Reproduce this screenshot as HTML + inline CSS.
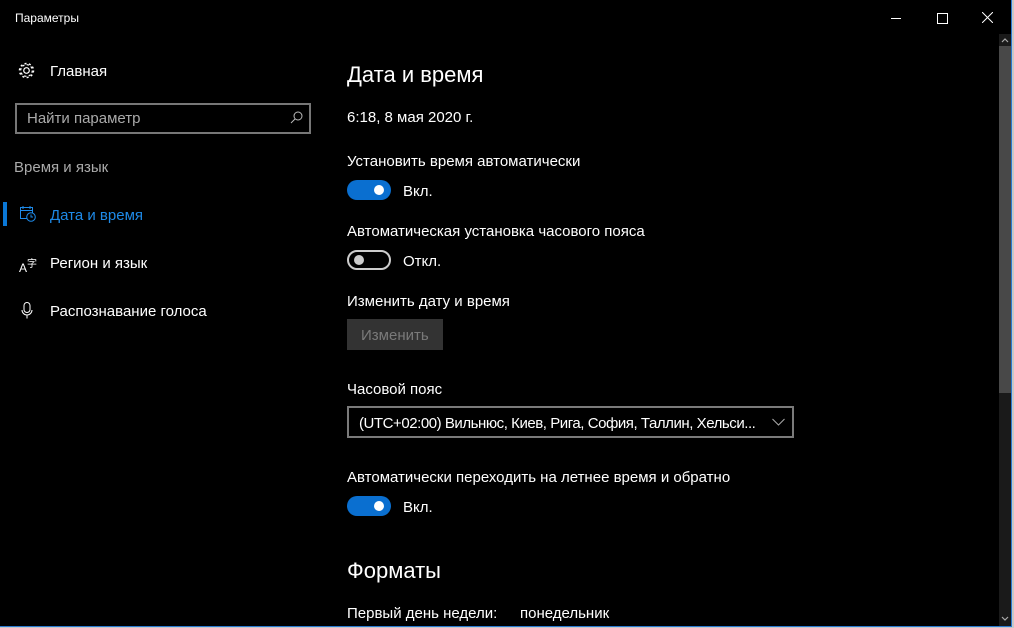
<!DOCTYPE html>
<html><head><meta charset="utf-8"><style>
body{margin:0;width:1014px;height:628px;background:#c8c8c8;overflow:hidden;font-family:"Liberation Sans","DejaVu Sans",sans-serif;position:relative}
.win{position:absolute;left:0;top:0;width:1011px;height:626px;background:#000;border-right:1px solid #2b79d0;border-bottom:1px solid #2b79d0}
.t{position:absolute;color:#fff;white-space:nowrap}
.tog{position:absolute;width:44px;height:20px;border-radius:11px;box-sizing:border-box}
.on{background:#0a6fd0}
.on:after{content:"";position:absolute;right:7px;top:5px;width:10px;height:10px;border-radius:50%;background:#fff}
.off{border:2px solid #ccc}
.off:after{content:"";position:absolute;left:5px;top:3px;width:10px;height:10px;border-radius:50%;background:#ccc}
</style></head><body><div class="win">
<div class="t" style="left:15px;top:11px;font-size:12px">Параметры</div>
<div style="position:absolute;left:891px;top:18px;width:10px;height:1px;background:#fff"></div>
<div style="position:absolute;left:937px;top:13px;width:9px;height:9px;border:1px solid #fff"></div>
<svg style="position:absolute;left:982px;top:12px" width="11" height="11"><path d="M0 0L11 11M11 0L0 11" stroke="#fff" stroke-width="1"/></svg>
<svg style="position:absolute;left:18px;top:62px" width="17" height="17" viewBox="0 0 17 17"><circle cx="8.5" cy="8.5" r="2.8" fill="none" stroke="#fff" stroke-width="1.2"/><circle cx="8.5" cy="8.5" r="5.8" fill="none" stroke="#fff" stroke-width="1.2" stroke-dasharray="2.3 2.25"/><circle cx="8.5" cy="8.5" r="7" fill="none" stroke="#fff" stroke-width="1.5" stroke-dasharray="2 2.4"/></svg>
<div class="t" style="left:50px;top:63px;font-size:15px">Главная</div>
<div style="position:absolute;left:15px;top:103px;width:292px;height:27px;border:2px solid #777"></div>
<div class="t" style="left:27px;top:110px;font-size:15px;color:#aaa">Найти параметр</div>
<svg style="position:absolute;left:290px;top:111px" width="13" height="13"><circle cx="8" cy="5" r="4" fill="none" stroke="#bbb" stroke-width="1"/><path d="M5 8L1 12" stroke="#bbb"/></svg>
<div class="t" style="left:14px;top:159px;font-size:15px;color:#aaa">Время и язык</div>
<div style="position:absolute;left:3px;top:202px;width:4px;height:24px;background:#0a78d7"></div>
<svg style="position:absolute;left:20px;top:206px" width="16" height="16"><rect x="0.5" y="1.5" width="12" height="11" fill="none" stroke="#1e8ae8"/><path d="M0.5 4.5H12.5M3 0V3M10 0V3" stroke="#1e8ae8"/><circle cx="11" cy="11" r="4.3" fill="#000" stroke="#1e8ae8"/><path d="M11 8.5V11H13" stroke="#1e8ae8" fill="none"/></svg>
<div class="t" style="left:50px;top:207px;font-size:15px;color:#1e8ae8">Дата и время</div>
<div class="t" style="left:19px;top:255px;font-size:12px">A<sup style="font-size:10px">字</sup></div>
<div class="t" style="left:50px;top:255px;font-size:15px">Регион и язык</div>
<svg style="position:absolute;left:21px;top:302px" width="12" height="17"><rect x="3" y="0.5" width="6" height="10" rx="3" fill="none" stroke="#fff"/><path d="M1 8a5 5 0 0 0 10 0M6 13V16.5" fill="none" stroke="#fff"/></svg>
<div class="t" style="left:50px;top:303px;font-size:15px">Распознавание голоса</div>

<div class="t" style="left:347px;top:62px;font-size:22px">Дата и время</div>
<div class="t" style="left:347px;top:109px;font-size:15px">6:18, 8 мая 2020 г.</div>
<div class="t" style="left:347px;top:153px;font-size:15px">Установить время автоматически</div>
<div class="tog on" style="left:347px;top:180px"></div>
<div class="t" style="left:403px;top:183px;font-size:15px">Вкл.</div>
<div class="t" style="left:347px;top:223px;font-size:15px">Автоматическая установка часового пояса</div>
<div class="tog off" style="left:347px;top:250px"></div>
<div class="t" style="left:403px;top:253px;font-size:15px">Откл.</div>
<div class="t" style="left:347px;top:293px;font-size:15px">Изменить дату и время</div>
<div style="position:absolute;left:347px;top:319px;width:96px;height:31px;background:#333"></div>
<div class="t" style="left:361px;top:327px;font-size:15px;color:#7a7a7a">Изменить</div>
<div class="t" style="left:347px;top:381px;font-size:15px">Часовой пояс</div>
<div style="position:absolute;left:347px;top:406px;width:443px;height:28px;border:2px solid #7a7a7a"></div>
<div class="t" style="left:359px;top:415px;font-size:15px;letter-spacing:-0.45px">(UTC+02:00) Вильнюс, Киев, Рига, София, Таллин, Хельси...</div>
<svg style="position:absolute;left:772px;top:418px" width="13" height="8"><path d="M0.5 1L6.5 7L12.5 1" fill="none" stroke="#aaa"/></svg>
<div class="t" style="left:347px;top:469px;font-size:15px">Автоматически переходить на летнее время и обратно</div>
<div class="tog on" style="left:347px;top:496px"></div>
<div class="t" style="left:403px;top:499px;font-size:15px">Вкл.</div>
<div class="t" style="left:347px;top:558px;font-size:22px">Форматы</div>
<div class="t" style="left:347px;top:605px;font-size:15px">Первый день недели:</div>
<div class="t" style="left:520px;top:605px;font-size:15px">понедельник</div>

<div style="position:absolute;left:999px;top:34px;width:12px;height:592px;background:#1a1a1a"></div>
<div style="position:absolute;left:999px;top:46px;width:12px;height:347px;background:#484848"></div>
<svg style="position:absolute;left:1001px;top:37px" width="8" height="6"><path d="M1 5L4 2L7 5" fill="none" stroke="#aaa" stroke-width="1.2"/></svg>
<svg style="position:absolute;left:1001px;top:616px" width="8" height="6"><path d="M1 1L4 4L7 1" fill="none" stroke="#aaa" stroke-width="1.2"/></svg>
</div></body></html>
